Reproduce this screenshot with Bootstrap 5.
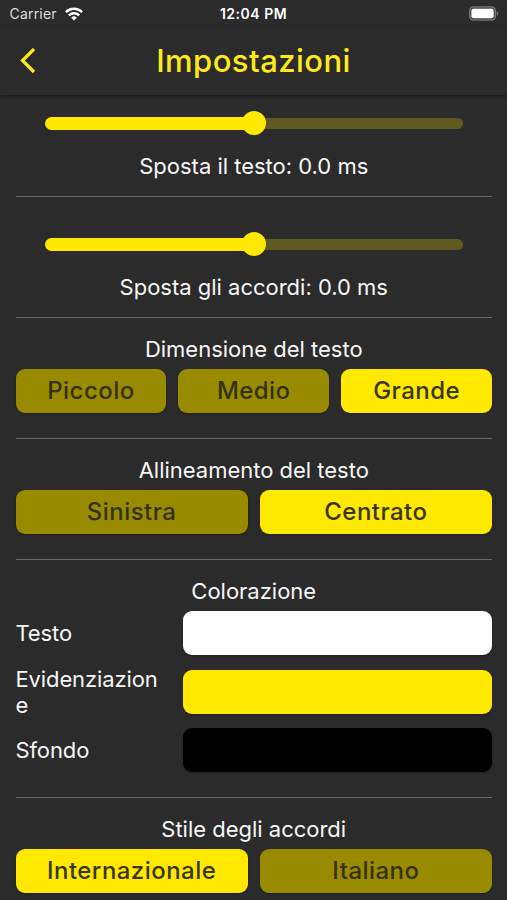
<!DOCTYPE html>
<html lang="it">
<head>
<meta charset="utf-8">
<meta name="viewport" content="width=device-width, initial-scale=1">
<title>Impostazioni</title>
<link href="https://cdn.jsdelivr.net/npm/bootstrap@5.3.0/dist/css/bootstrap.min.css" rel="stylesheet">
<style>
body{background:#2b2b2b;color:#f7f7f7;font-family:Inter,"Liberation Sans",sans-serif;font-size:22px;line-height:26px;letter-spacing:-.01px;height:900px;overflow:hidden}
.statusbar{height:27px;font-size:14px;line-height:27px;letter-spacing:.2px;color:#ddd}
.clock{font-weight:600;font-size:14px;letter-spacing:.5px;color:#fff}
.topbar{height:68px;box-shadow:0 1px 3px rgba(0,0,0,.45)}
.topbar h1{font-size:31px;line-height:36px;font-weight:500;color:#ffe91a;letter-spacing:.45px}
.section{margin:0 15px 0 15.5px;border-bottom:1px solid #686868;height:121px}
.section.first{height:102px}
.section.tall{height:238px}
.section.last{border:0}
.slider-block{padding-top:35px}
.first.slider-block{padding-top:16px}
.slider{height:24px;margin:0 29px}
.label{margin-top:17.5px}
.done{height:13px;border-radius:7px;background:#ffe900;width:50%}
.rest{height:11px;border-radius:0 6px 6px 0;background:#605a20;width:50%}
.thumb{width:24px;height:24px;margin:0 -12px;z-index:1;background:#ffe900}
.choice{height:43.5px;border-radius:9px;border:0;padding:0;background:#998b00;color:#34310f;font-size:24px;line-height:43px;font-weight:450;letter-spacing:.45px;box-shadow:0 1px 2px rgba(0,0,0,.3)}
.choice.active,.choice.active:hover{background:#ffe900!important;color:#39350c!important}
.choices{gap:12px}
.heading{padding-top:18px;margin-bottom:7px}
.swatches{display:grid;grid-template-columns:155px 1fr;column-gap:12px;row-gap:14.5px;grid-auto-rows:44px;align-items:center}
.swatches span{width:146px;word-break:break-all;letter-spacing:-.12px}
.swatch{height:44px;border-radius:9px;box-shadow:0 1px 2px rgba(0,0,0,.3)}
.yellow{background:#ffe900}
</style>
<script src="https://cdn.jsdelivr.net/npm/bootstrap@5.3.0/dist/js/bootstrap.bundle.min.js"></script>
</head>
<body>
<header>
<div class="statusbar row g-0 px-2">
<div class="col d-flex align-items-center"><span class="mx-1 me-2 ms-0 ps-0">&#8202;Carrier</span>
<svg width="18" height="14" viewBox="0 0 18 14" fill="none" stroke="#fff" stroke-width="2.4"><path d="M.9 5.1a11.6 11.6 0 0 1 16.2 0M3.8 8.4a7.4 7.4 0 0 1 10.4 0"/><path d="M9 13.5 6.2 10.7a4 4 0 0 1 5.6 0z" fill="#fff" stroke="none"/></svg></div>
<div class="col-auto clock">12:04 PM</div>
<div class="col d-flex align-items-center justify-content-end"><svg class="flex-shrink-0" width="30" height="15" viewBox="0 0 31 15"><rect x=".7" y=".7" width="26.6" height="13.6" rx="4" fill="#444" stroke="#777" stroke-width="1.3"/><rect x="2.5" y="2.5" width="23" height="10" rx="2.2" fill="#fff"/><path d="M28.7 5v5q1.6-.6 1.6-2.5T28.7 5z" fill="#777"/></svg></div>
</div>
<div class="topbar row g-0 align-items-center">
<div class="col d-flex"><svg class="ms-3" width="24" height="26" viewBox="0 0 24 26" fill="none" stroke="#ffe91a" stroke-width="3.2"><path d="M18 1 6.500 12.500l11.500 11.500"/></svg></div>
<h1 class="col-auto m-0">Impostazioni</h1>
<div class="col"></div>
</div>
</header>
<main>
<section class="section slider-block first text-center">
<div class="slider d-flex align-items-center"><div class="done"></div><div class="thumb rounded-circle flex-shrink-0"></div><div class="rest"></div></div>
<div class="label">Sposta il testo: 0.0 ms</div>
</section>
<section class="section slider-block text-center">
<div class="slider d-flex align-items-center"><div class="done"></div><div class="thumb rounded-circle flex-shrink-0"></div><div class="rest"></div></div>
<div class="label">Sposta gli accordi: 0.0 ms</div>
</section>
<section class="section text-center">
<div class="heading">Dimensione del testo</div>
<div class="choices d-flex"><button class="btn choice w-100">Piccolo</button><button class="btn choice w-100">Medio</button><button class="btn choice w-100 active">Grande</button></div>
</section>
<section class="section text-center">
<div class="heading">Allineamento del testo</div>
<div class="choices d-flex"><button class="btn choice w-100">Sinistra</button><button class="btn choice w-100 active">Centrato</button></div>
</section>
<section class="section tall">
<div class="heading text-center">Colorazione</div>
<div class="swatches"><span>Testo</span><div class="swatch bg-white"></div><span>Evidenziazione</span><div class="swatch yellow"></div><span>Sfondo</span><div class="swatch bg-black"></div></div>
</section>
<section class="section last text-center">
<div class="heading">Stile degli accordi</div>
<div class="choices d-flex"><button class="btn choice w-100 active">Internazionale</button><button class="btn choice w-100">Italiano</button></div>
</section>
</main>
</body>
</html>
